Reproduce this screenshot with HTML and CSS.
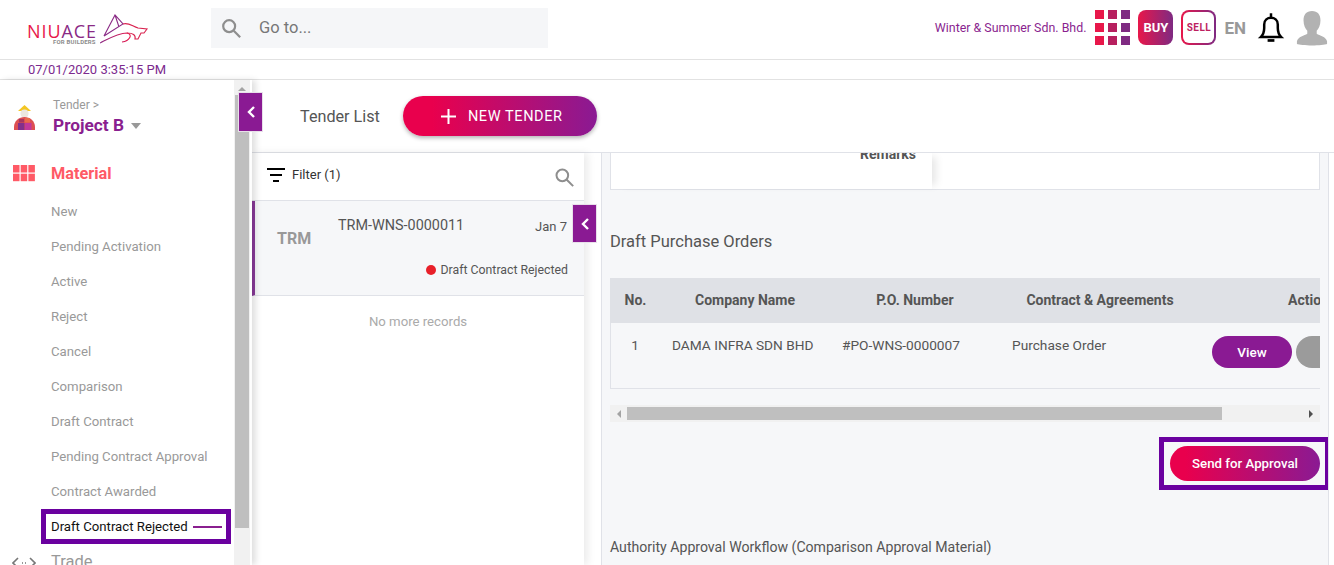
FILE: index.html
```html
<!DOCTYPE html>
<html lang="en">
<head>
    <meta charset="UTF-8">
    <title>Tender List</title>
    <link rel="stylesheet" href="styles.css">
</head>
<body>
    <header class="topbar">
        <div class="logo">
            <svg class="logo-mark" width="50" height="34" viewBox="0 0 50 34" fill="none">
                <defs>
                    <linearGradient id="logoGrad" x1="0" y1="0" x2="1" y2="0">
                        <stop offset="0" stop-color="#8a2a85"/>
                        <stop offset="1" stop-color="#e8174a"/>
                    </linearGradient>
                </defs>
                <path d="M4 24 L15 3 L23 12 L4 24 M15 3 L19 15" stroke="#8a2a85" stroke-width="1.1"/>
                <path d="M23 12 C28 10 32 14 38 16 L47 17 L44 21 L41 21 L38 27 L35 27 C36 23 33 21 27 21" stroke="#d9224f" stroke-width="1.1"/>
                <path d="M0 31 C8 27 18 21 27 21 C33 22 30 29 22 30" stroke="url(#logoGrad)" stroke-width="1.1"/>
            </svg>
            <span class="logo-name"><span class="logo-red">NIU</span>ACE</span>
            <span class="logo-sub">FOR BUILDERS</span>
        </div>
        <div class="goto">
            <svg width="22" height="22" viewBox="0 0 24 24" fill="none" stroke="#8e8e8e" stroke-width="2.4"><circle cx="10" cy="10" r="6.5"/><path d="M15 15l7 7"/></svg>
            <span>Go to...</span>
        </div>
        <div class="top-right">
            <span class="company">Winter &amp; Summer Sdn. Bhd.</span>
            <div class="apps">
                <i></i><i></i><i></i><i></i><i></i><i></i><i></i><i></i><i></i>
            </div>
            <span class="buy">BUY</span>
            <span class="sell">SELL</span>
            <span class="lang">EN</span>
            <svg class="bell" width="30" height="34" viewBox="0 0 26 30" fill="none" stroke="#000" stroke-width="2.2">
                <path d="M4 23c2-2 3-4 3-8v-3c0-4 3-6 6-6s6 2 6 6v3c0 4 1 6 3 8z"/>
                <path d="M13 2v4"/>
                <path d="M10 26h6" stroke-width="2.4"/>
            </svg>
            <svg class="avatar" width="32" height="38" viewBox="0 0 34 38">
                <path fill="#b2b2b2" d="M17 1c6 0 9 4 9 10 0 5-2 9-4 11v3c3 2 10 3 11 8v3c-4 2-28 2-32 0v-3c1-5 8-6 11-8v-3c-2-2-4-6-4-11 0-6 3-10 9-10z"/>
            </svg>
        </div>
    </header>
    <div class="datebar">07/01/2020 3:35:15 PM</div>

    <div class="body">
        <aside class="sidebar">
            <div class="side-inner">
                <div class="project">
                    <svg width="26" height="30" viewBox="0 0 26 30">
                        <path fill="#f3c623" d="M6 8 L12.5 2 L19 8z"/>
                        <circle cx="12.5" cy="10.5" r="4" fill="#ece7df"/>
                        <path fill="#dd4f52" d="M2 27v-3c0-6 5-10 10.5-10S23 18 23 24v3z"/>
                        <path fill="#82308c" d="M6 20h6.5v7H6z"/>
                        <path fill="#c2389a" d="M13 20h6.5v7H13z"/>
                        <path fill="#ea6a4a" d="M13 15h5v4.500h-5z"/>
                        <path fill="#a8355f" d="M7 16h5v3.500H7z"/>
                    </svg>
                    <div>
                        <div class="crumb">Tender &gt;</div>
                        <div class="project-name">Project B <b class="caret"></b></div>
                    </div>
                </div>
                <div class="menu-head">
                    <svg width="22" height="17" viewBox="0 0 22 17" fill="#ff5a66">
                        <rect width="6.5" height="7.5"/><rect x="7.7" width="6.5" height="7.5"/><rect x="15.4" width="6.5" height="7.5"/>
                        <rect y="8.7" width="6.5" height="7.5"/><rect x="7.7" y="8.7" width="6.5" height="7.5"/><rect x="15.4" y="8.7" width="6.5" height="7.5"/>
                    </svg>
                    <span>Material</span>
                </div>
                <ul class="menu">
                    <li>New</li>
                    <li>Pending Activation</li>
                    <li>Active</li>
                    <li>Reject</li>
                    <li>Cancel</li>
                    <li>Comparison</li>
                    <li>Draft Contract</li>
                    <li>Pending Contract Approval</li>
                    <li>Contract Awarded</li>
                    <li class="current"><span class="current-box">Draft Contract Rejected<b class="dash"></b></span></li>
                </ul>
                <div class="menu-next">
                    <svg width="24" height="12" viewBox="0 0 24 12" fill="none" stroke="#777" stroke-width="1.6"><path d="M6 3L1 8l3 3M18 3l5 5-3 3"/><path d="M10 8h1M13 8h1"/></svg>
                    <span>Trade</span>
                </div>
            </div>
            <div class="scrollbar">
                <div class="arrow-up"></div>
                <div class="thumb"></div>
            </div>
            <div class="collapse side-collapse"><svg width="10" height="14" viewBox="0 0 10 14" fill="none" stroke="#fff" stroke-width="2.4"><path d="M8 2L3 7l5 5"/></svg></div>
        </aside>

        <main class="main">
            <div class="page-head">
                <span class="page-title">Tender List</span>
                <button class="new-btn">
                    <svg class="plus" width="15" height="15" viewBox="0 0 15 15" stroke="#fff" stroke-width="2"><path d="M7.5 0v15M0 7.500h15"/></svg>
                    NEW TENDER
                </button>
            </div>
            <div class="panes">
                <section class="list">
                    <div class="filter-row">
                        <svg width="18" height="14" viewBox="0 0 18 14" fill="#000"><rect width="18" height="2"/><rect x="3" y="6" width="12" height="2"/><rect x="6" y="12" width="6" height="2"/></svg>
                        <span>Filter (1)</span>
                        <svg class="filter-search" width="20" height="20" viewBox="0 0 24 24" fill="none" stroke="#8e8e8e" stroke-width="2.4"><circle cx="10" cy="10" r="7"/><path d="M15 15l8 8"/></svg>
                    </div>
                    <div class="tender-card">
                        <div class="trm">TRM</div>
                        <div class="card-body">
                            <div class="card-top">
                                <span class="card-id">TRM-WNS-0000011</span>
                                <span class="card-date">Jan 7</span>
                            </div>
                            <div class="card-status"><i class="dot"></i>Draft Contract Rejected</div>
                        </div>
                        <div class="collapse card-collapse"><svg width="10" height="14" viewBox="0 0 10 14" fill="none" stroke="#fff" stroke-width="2.4"><path d="M8 2L3 7l5 5"/></svg></div>
                    </div>
                    <div class="no-more">No more records</div>
                </section>
                <div class="pane-gap"></div>
                <section class="detail">
                    <div class="remarks-card">
                        <div class="remarks-left"><span>Remarks</span></div>
                    </div>
                    <h3 class="section-title">Draft Purchase Orders</h3>
                    <div class="table-wrap">
                        <table class="po-table">
                            <thead>
                                <tr>
                                    <th class="col-no">No.</th>
                                    <th class="col-wide">Company Name</th>
                                    <th class="col-wide">P.O. Number</th>
                                    <th class="col-contract">Contract &amp; Agreements</th>
                                    <th class="col-action">Action</th>
                                </tr>
                            </thead>
                            <tbody>
                                <tr>
                                    <td class="td-no">1</td>
                                    <td>DAMA INFRA SDN BHD</td>
                                    <td>#PO-WNS-0000007</td>
                                    <td>Purchase Order</td>
                                    <td><div class="actions"><span class="pill view">View</span><span class="pill grey"></span></div></td>
                                </tr>
                            </tbody>
                        </table>
                    </div>
                    <div class="hscroll">
                        <b class="hs-left"></b>
                        <div class="hs-thumb"></div>
                        <b class="hs-right"></b>
                    </div>
                    <div class="send-row">
                        <div class="send-box"><button class="send-btn">Send for Approval</button></div>
                    </div>
                    <div class="workflow">Authority Approval Workflow (Comparison Approval Material)</div>
                </section>
                <div class="right-edge"></div>
            </div>
        </main>
    </div>
</body>
</html>
```

FILE: styles.css
```css
* {
    box-sizing: border-box;
}
html, body {
    margin: 0;
    height: 100%;
    overflow: hidden;
}
body {
    font-family: Roboto, Arial, sans-serif;
    font-size: 14px;
    color: #555;
    background: #fff;
}

/* top bar */
.topbar {
    height: 60px;
    padding-bottom: 4px;
    border-bottom: 1px solid #e2e2e2;
    display: flex;
    align-items: center;
}
.logo {
    position: relative;
    width: 211px;
    height: 55px;
    flex: none;
}
.logo-mark {
    position: absolute;
    left: 100px;
    top: 12px;
}
.logo-name {
    position: absolute;
    left: 27px;
    top: 24px;
    font-family: "Open Sans", Arial, sans-serif;
    font-size: 18px;
    line-height: 14px;
    letter-spacing: 0.9px;
    color: #8a2a85;
}
.logo-red {
    color: #e8174a;
}
.logo-sub {
    position: absolute;
    left: 53px;
    top: 38px;
    font-size: 6px;
    line-height: 7px;
    font-weight: 700;
    letter-spacing: 0.2px;
    color: #8d8d8d;
}
.goto {
    width: 337px;
    height: 40px;
    background: #f5f6f8;
    display: flex;
    align-items: center;
    padding-left: 9px;
    gap: 17px;
    font-size: 16.5px;
    color: #777;
}
.top-right {
    margin-left: auto;
    display: flex;
    align-items: center;
    padding-right: 6px;
}
.company {
    font-size: 12.4px;
    color: #8a1f8f;
    margin-right: 9px;
}
.apps {
    display: grid;
    grid-template-columns: repeat(3, 9px);
    grid-auto-rows: 9px;
    gap: 4px;
    margin-right: 8px;
}
.apps i {
    background: #e8174a;
}
.apps i:nth-child(3n+2) {
    background: #b7205f;
}
.apps i:nth-child(3n) {
    background: #7f2a82;
}
.buy, .sell {
    width: 35px;
    height: 35px;
    border-radius: 8px;
    display: flex;
    align-items: center;
    justify-content: center;
    font-weight: 700;
}
.buy {
    background: linear-gradient(90deg, #e8174a, #7f2a82);
    color: #fff;
    font-size: 13px;
    margin-right: 8px;
}
.sell {
    border: 2px solid transparent;
    background: linear-gradient(#fff, #fff) padding-box, linear-gradient(90deg, #e8174a, #7f2a82) border-box;
    color: #bd1f5f;
    font-size: 10px;
    letter-spacing: 0.5px;
    margin-right: 8px;
}
.lang {
    font-size: 17px;
    font-weight: 700;
    color: #999;
    margin-right: 10px;
}
.bell {
    margin-right: 10px;
}

/* date */
.datebar {
    height: 20px;
    border-bottom: 1px solid #e2e2e2;
    padding-left: 28px;
    font-size: 13px;
    line-height: 20px;
    color: #7c2a8e;
}

.body {
    display: flex;
    height: 485px;
}

/* sidebar */
.sidebar {
    position: relative;
    width: 252px;
    flex: none;
    display: flex;
    box-shadow: 4px 0 6px rgba(0, 0, 0, 0.12);
    z-index: 2;
}
.side-inner {
    width: 234px;
    flex: none;
    overflow: hidden;
}
.scrollbar {
    width: 16px;
    background: #f1f1f1;
    position: relative;
}
.arrow-up {
    width: 0;
    margin: 7px auto 0;
    border: 4px solid transparent;
    border-top: 0;
    border-bottom: 4px solid #a3a3a3;
}
.thumb {
    margin: 4px 1px 0;
    height: 433px;
    background: #bfbfbf;
}
.project {
    display: flex;
    align-items: flex-start;
    padding: 17px 0 0 12px;
    gap: 15px;
    height: 75px;
}
.project svg {
    margin-top: 6px;
}
.crumb {
    font-size: 12px;
    line-height: 16px;
    color: #999;
}
.project-name {
    font-size: 17.3px;
    font-weight: 700;
    line-height: 24px;
    color: #8a1f8f;
}
.caret {
    display: inline-block;
    vertical-align: middle;
    margin-left: 3px;
    border: 5px solid transparent;
    border-bottom: 0;
    border-top: 6px solid #999;
}
.menu-head {
    height: 36px;
    display: flex;
    align-items: center;
    padding-left: 13px;
    gap: 16px;
    font-size: 16.3px;
    font-weight: 700;
    color: #ff5a66;
}
.menu {
    list-style: none;
    margin: 3px 0 0;
    padding: 0;
}
.menu li {
    height: 35px;
    line-height: 35px;
    padding-left: 51px;
    font-size: 13.2px;
    color: #999;
}
.menu li.current {
    padding-left: 41px;
    color: #111;
}
.current-box {
    display: flex;
    align-items: center;
    justify-content: space-between;
    width: 190px;
    height: 35px;
    padding: 0 4px 0 5px;
    border: 5px solid #6a009f;
    line-height: 1;
    white-space: nowrap;
}
.dash {
    width: 29px;
    height: 2px;
    background: #8a1f8f;
}
.menu-next {
    display: flex;
    align-items: center;
    gap: 15px;
    padding-left: 12px;
    font-size: 16.5px;
    color: #999;
    height: 30px;
    margin-top: 2px;
}
.collapse {
    position: absolute;
    width: 25px;
    background: #8a1a93;
    border: 1px solid #e8e0ea;
    display: flex;
    align-items: center;
    justify-content: center;
}
.side-collapse {
    left: 238px;
    top: 12px;
    height: 40px;
}

/* main */
.main {
    flex: 1;
    min-width: 0;
    display: flex;
    flex-direction: column;
}
.page-head {
    height: 73px;
    flex: none;
    border-bottom: 1px solid #e0e2e8;
    display: flex;
    align-items: center;
    padding-left: 48px;
    gap: 23px;
}
.page-title {
    font-size: 16.2px;
    color: #555;
}
.new-btn {
    width: 194px;
    height: 40px;
    border: 0;
    padding: 0 0 0 38px;
    border-radius: 20px;
    background: linear-gradient(90deg, #e9004d 15%, #8a1a93);
    box-shadow: 0 2px 4px rgba(0, 0, 0, 0.3);
    color: #fff;
    font-family: inherit;
    font-size: 14.5px;
    letter-spacing: 0.6px;
    white-space: nowrap;
    display: flex;
    align-items: center;
}
.plus {
    margin-right: 12px;
}
.panes {
    flex: 1;
    display: flex;
    min-height: 0;
}
.list {
    width: 332px;
    flex: none;
    position: relative;
    z-index: 1;
    box-shadow: 4px 0 8px rgba(0, 0, 0, 0.08);
    background: #fff;
}
.filter-row {
    height: 48px;
    display: flex;
    align-items: center;
    padding: 0 10px 4px 15px;
    gap: 7px;
    font-size: 13px;
    color: #333;
    border-bottom: 1px solid #e0e2e8;
}
.filter-search {
    margin-left: auto;
    margin-top: 4px;
}
.tender-card {
    position: relative;
    height: 95px;
    background: #f6f7f9;
    border-left: 3px solid #8a3a9a;
    border-bottom: 1px solid #e0e2e8;
    display: flex;
}
.trm {
    width: 83px;
    padding: 28px 0 0 22px;
    font-size: 16px;
    font-weight: 700;
    color: #999;
}
.card-body {
    flex: 1;
    padding: 16px 16px 0 0;
}
.card-top {
    display: flex;
    justify-content: space-between;
    color: #555;
}
.card-id {
    font-size: 14.4px;
}
.card-date {
    font-size: 13px;
    margin: 2px 1px 0 0;
}
.card-status {
    margin-top: 29px;
    display: flex;
    align-items: center;
    justify-content: flex-end;
    font-size: 12.3px;
    color: #555;
}
.dot {
    width: 10px;
    height: 10px;
    border-radius: 50%;
    background: #e8202a;
    margin-right: 5px;
}
.card-collapse {
    right: -13px;
    top: 3px;
    width: 25px;
    height: 39px;
}
.no-more {
    text-align: center;
    font-size: 13.2px;
    color: #aaa;
    margin-top: 18px;
}
.pane-gap {
    width: 18px;
    flex: none;
    border-right: 1px solid #e0e2e8;
    background: #fff;
}
.detail {
    width: 726px;
    flex: none;
    background: #f6f7f9;
    padding: 0 8px;
    overflow: hidden;
}
.right-edge {
    flex: 1;
    border-left: 1px solid #e0e2e8;
    background: #fff;
}
.remarks-card {
    height: 37px;
    width: 710px;
    background: #fff;
    border: 1px solid #e0e2e8;
    border-top: 0;
}
.remarks-left {
    width: 321px;
    height: 36px;
    text-align: right;
    padding-right: 16px;
    font-size: 14px;
    line-height: 3px;
    font-weight: 700;
    color: #555;
    box-shadow: 8px 0 8px -4px rgba(0, 0, 0, 0.1);
}
.section-title {
    margin: 42px 0 0;
    height: 46px;
    font-size: 16.5px;
    font-weight: 400;
    line-height: 20px;
    color: #555;
}
.table-wrap {
    width: 710px;
    overflow: hidden;
    border-bottom: 1px solid #e0e2e8;
}
.po-table {
    border-collapse: collapse;
    table-layout: fixed;
    width: 814px;
}
.po-table th {
    height: 45px;
    padding: 0 0 2px;
    background: #dfe1e6;
    font-size: 14px;
    font-weight: 700;
    color: #555;
}
.po-table th.col-no {
    width: 50px;
    padding-left: 1px;
}
.col-wide {
    width: 170px;
}
.col-contract {
    width: 200px;
}
.po-table th.col-action {
    width: 224px;
    text-align: left;
    padding-left: 88px;
}
.po-table td {
    height: 65px;
    padding: 14px 0 0 12px;
    vertical-align: top;
    white-space: nowrap;
    font-size: 13.7px;
    color: #555;
}
.po-table td.td-no {
    padding-left: 0;
    text-align: center;
    box-shadow: inset 1px 0 #e0e2e8;
}
.actions {
    display: flex;
    gap: 4px;
    margin-top: -1px;
}
.pill {
    width: 80px;
    height: 32px;
    border-radius: 16px;
    display: flex;
    align-items: center;
    justify-content: center;
    font-weight: 500;
    color: #fff;
}
.view {
    background: #8a1a93;
    font-size: 13.5px;
}
.grey {
    background: #9b9b9b;
}
.hscroll {
    margin-top: 16px;
    width: 710px;
    height: 17px;
    background: #f1f1f1;
    display: flex;
    align-items: center;
    padding: 0 7px;
}
.hs-left, .hs-right {
    border: 4px solid transparent;
}
.hs-left {
    border-left: 0;
    border-right: 4px solid #a3a3a3;
}
.hs-right {
    margin-left: auto;
    border-right: 0;
    border-left: 4px solid #505050;
}
.hs-thumb {
    width: 595px;
    height: 13px;
    margin-left: 6px;
    background: #bfbfbf;
}
.send-row {
    display: flex;
    justify-content: flex-end;
    margin-top: 15px;
}
.send-box {
    width: 171px;
    height: 53px;
    margin-right: -10px;
    border: 5px solid #6a009f;
    padding: 4px 0 0 6px;
}
.send-btn {
    width: 150px;
    height: 35px;
    border: 0;
    border-radius: 18px;
    background: linear-gradient(90deg, #e9004d 10%, #8a1a93);
    color: #fff;
    font-family: inherit;
    font-size: 13.25px;
    font-weight: 500;
}
.workflow {
    margin-top: 49px;
    font-size: 14.1px;
    color: #555;
}
```
